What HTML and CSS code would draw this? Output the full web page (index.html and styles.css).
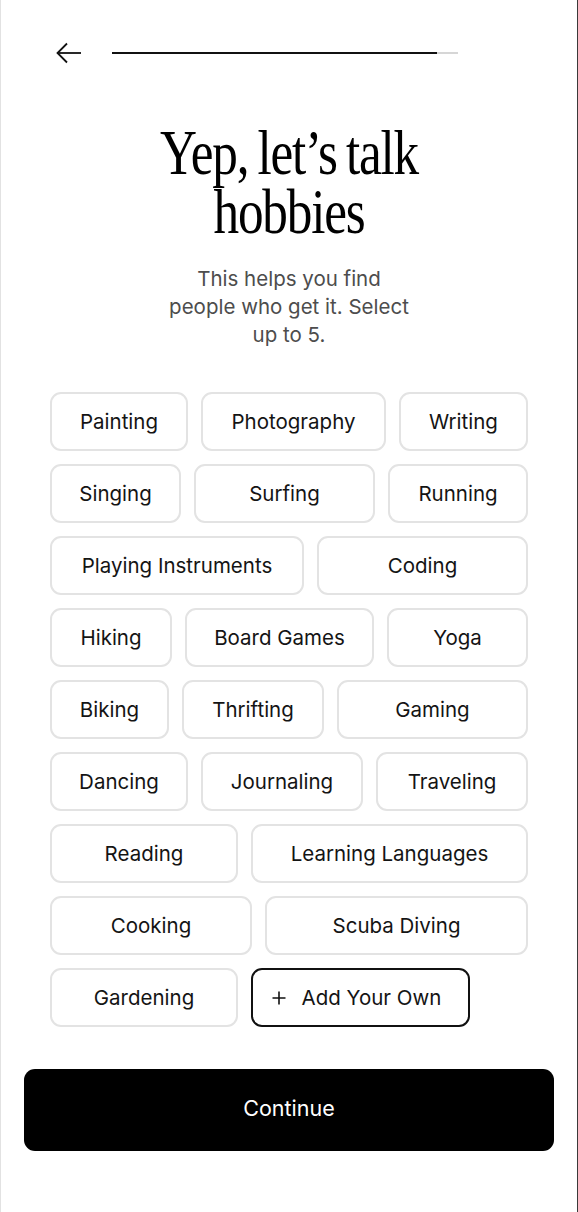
FILE: index.html
```html
<!DOCTYPE html>
<html lang="en">
<head>
<meta charset="utf-8">
<title>Hobbies</title>
<link rel="stylesheet" href="styles.css">
</head>
<body>
<div class="screen">
  <header class="top">
    <button class="back" aria-label="Back">
      <svg width="25" height="22" viewBox="0 0 25 22" fill="none" stroke="#111" stroke-width="1.8" stroke-linejoin="miter">
        <path d="M25 11H1.5"/>
        <path d="M11 1.5L1.5 11L11 20.5"/>
      </svg>
    </button>
    <div class="progress"><div class="progress-fill" style="width:94%"></div></div>
  </header>

  <h1 class="title"><span class="title-line">Yep, let’s talk</span><span class="title-line">hobbies</span></h1>
  <p class="subtitle">This helps you find<br>people who get it. Select<br>up to 5.</p>

  <div class="chips">
    <div class="row r1">
      <button class="chip">Painting</button>
      <button class="chip">Photography</button>
      <button class="chip">Writing</button>
    </div>
    <div class="row r2">
      <button class="chip">Singing</button>
      <button class="chip">Surfing</button>
      <button class="chip">Running</button>
    </div>
    <div class="row r3">
      <button class="chip">Playing Instruments</button>
      <button class="chip">Coding</button>
    </div>
    <div class="row r4">
      <button class="chip">Hiking</button>
      <button class="chip">Board Games</button>
      <button class="chip">Yoga</button>
    </div>
    <div class="row r5">
      <button class="chip">Biking</button>
      <button class="chip">Thrifting</button>
      <button class="chip">Gaming</button>
    </div>
    <div class="row r6">
      <button class="chip">Dancing</button>
      <button class="chip">Journaling</button>
      <button class="chip">Traveling</button>
    </div>
    <div class="row r7">
      <button class="chip">Reading</button>
      <button class="chip">Learning Languages</button>
    </div>
    <div class="row r8">
      <button class="chip">Cooking</button>
      <button class="chip">Scuba Diving</button>
    </div>
    <div class="row r9">
      <button class="chip">Gardening</button>
      <button class="chip chip-add">
        <svg width="14" height="14" viewBox="0 0 14 14" fill="none" stroke="#111" stroke-width="1.6">
          <path d="M7 0.5V13.5M0.5 7H13.5"/>
        </svg>
        <span>Add Your Own</span>
      </button>
    </div>
  </div>

  <button class="continue">Continue</button>
</div>
</body>
</html>
```

FILE: styles.css
```css
* {
  box-sizing: border-box;
}

html, body {
  margin: 0;
  padding: 0;
  background: #fff;
}

body {
  font-family: Inter, "Noto Sans", "Liberation Sans", sans-serif;
  color: #111;
}

.screen {
  width: 578px;
  height: 1212px;
  border-left: 1px solid #e2e2e2;
  border-right: 1px solid #3a3a3a;
  display: flex;
  flex-direction: column;
  overflow: hidden;
}

.top {
  margin-top: 33px;
  height: 40px;
  padding-left: 55px;
  display: flex;
  align-items: center;
  gap: 31px;
}

.back {
  border: 0;
  background: none;
  padding: 0;
  width: 25px;
  height: 22px;
  display: flex;
}

.progress {
  width: 346px;
  height: 2px;
  background: #d6d6d6;
}

.progress-fill {
  height: 100%;
  background: #111;
}

.title {
  margin: 50px 0 0;
  font-family: "Liberation Serif", "DejaVu Serif", serif;
  font-weight: 400;
  font-size: 64px;
  line-height: 59px;
  letter-spacing: -1.5px;
  word-spacing: -3px;
  text-align: center;
  color: #000;
  transform: scaleX(0.8);
  display: flex;
  flex-direction: column;
  align-items: center;
}

.title-line {
  display: block;
  height: 59px;
  white-space: nowrap;
}

.subtitle {
  margin: 24px 0 0;
  font-size: 20.5px;
  line-height: 28px;
  color: #4d4d4d;
  text-align: center;
  white-space: nowrap;
}

.chips {
  margin-top: 43px;
  padding-left: 49px;
  display: flex;
  flex-direction: column;
  gap: 13px;
}

.row {
  display: grid;
  column-gap: 13px;
  height: 59px;
}

.r1 { grid-template-columns: 138px 185px 129px; }
.r2 { grid-template-columns: 131px 181px 140px; }
.r3 { grid-template-columns: 254px 211px; }
.r4 { grid-template-columns: 122px 189px 141px; }
.r5 { grid-template-columns: 119px 142px 191px; }
.r6 { grid-template-columns: 138px 162px 152px; }
.r7 { grid-template-columns: 188px 277px; }
.r8 { grid-template-columns: 202px 263px; }
.r9 { grid-template-columns: 188px 219px; }

.chip {
  height: 59px;
  border: 2px solid #e3e3e3;
  border-radius: 11px;
  background: #fff;
  font-family: Inter, "Noto Sans", "Liberation Sans", sans-serif;
  font-size: 20.5px;
  font-weight: 400;
  color: #141414;
  display: flex;
  align-items: center;
  justify-content: center;
  padding: 0;
  white-space: nowrap;
}

.chip-add {
  border-color: #111;
  gap: 16px;
  padding-right: 8px;
}

.chip-add svg {
  flex: none;
}

.continue {
  margin: 42px 0 0 23px;
  width: 530px;
  height: 82px;
  border: 0;
  border-radius: 11px;
  background: #000;
  color: #fff;
  font-family: Inter, "Noto Sans", "Liberation Sans", sans-serif;
  font-size: 21.5px;
  font-weight: 400;
  padding: 0 0 4px;
}
```
